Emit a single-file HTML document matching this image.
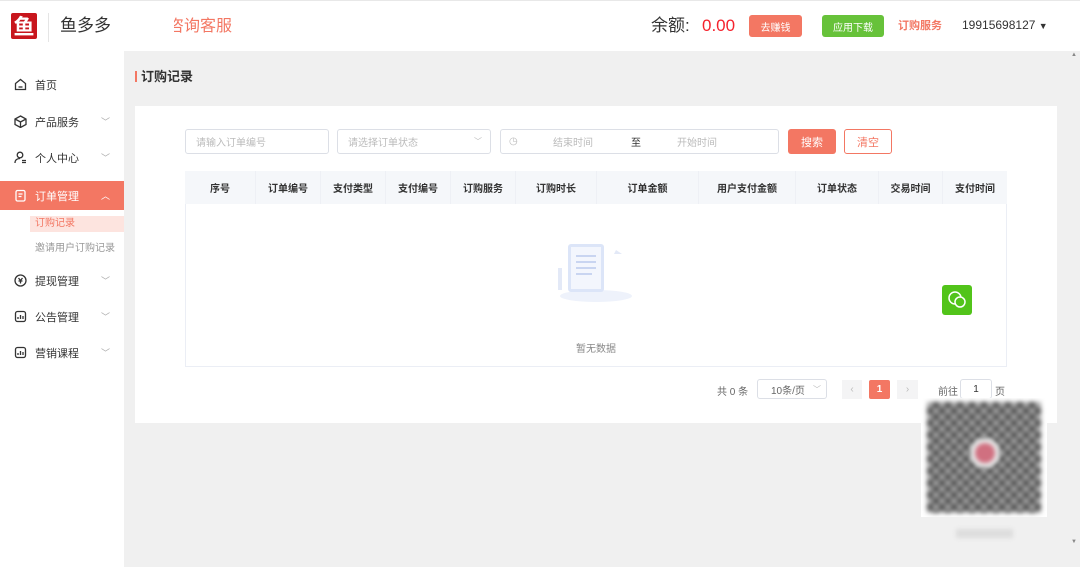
<!DOCTYPE html><html><head><meta charset="utf-8"><style>
*{box-sizing:border-box;margin:0;padding:0}
body{width:1080px;height:567px;overflow:hidden;background:#f0f0f0;font-family:"Liberation Sans","Noto Sans CJK SC",sans-serif;position:relative;font-size:12px;color:#333}
.a{position:absolute}
.c{display:flex;align-items:center;justify-content:center}
.hdr{left:0;top:0;width:1080px;height:51px;background:#fff;border-top:1px solid #e8e8e8}
.side{left:0;top:51px;width:124px;height:516px;background:#fff}
.mi{position:absolute;left:0;width:124px;height:30px;display:flex;align-items:center;padding-left:35px;font-size:11px;color:#333}
.mi svg{position:absolute;left:14px;top:8px}
.mi .ch{position:absolute;right:14px;top:8px;color:#aaa;font-size:9px}
.th{position:absolute;top:171px;height:33px;display:flex;align-items:center;justify-content:center;font-size:10px;font-weight:bold;color:#333;border-right:1px solid #eef0f5}
.inp{position:absolute;top:129px;height:25px;border:1px solid #dcdfe6;border-radius:3px;background:#fff;font-size:10px;color:#bbb;display:flex;align-items:center}
</style></head><body>
<div class="a hdr"></div>
<div class="a c" style="left:11px;top:13px;width:26px;height:26px;background:#c8161d;border-radius:2px;color:#fff;font-size:21px;font-weight:bold">鱼</div>
<div class="a" style="left:48px;top:13px;width:1px;height:29px;background:#e5e5e5"></div>
<div class="a" style="left:60px;top:14px;font-size:17px;color:#333;line-height:24px">鱼多多</div>
<div class="a" style="left:174px;top:14px;width:62px;height:26px;overflow:hidden"><div style="position:absolute;left:-6px;top:0;font-size:16px;line-height:26px;color:#f37763;white-space:nowrap">咨询客服</div></div>
<div class="a" style="left:651px;top:14px;font-size:17px;line-height:24px;color:#333">余额:</div>
<div class="a" style="left:702px;top:14px;font-size:17px;line-height:24px;color:#f5222d">0.00</div>
<div class="a c" style="left:749px;top:15px;width:53px;height:22px;background:#f37763;border-radius:3px;color:#fff;font-size:10px">去赚钱</div>
<div class="a c" style="left:822px;top:15px;width:62px;height:22px;background:#67c23a;border-radius:3px;color:#fff;font-size:10px">应用下载</div>
<div class="a" style="left:898px;top:18px;font-size:11px;line-height:16px;color:#f37763;font-weight:bold">订购服务</div>
<div class="a" style="left:962px;top:17px;font-size:12px;line-height:16px;color:#333">19915698127 <span style="font-size:9px">▼</span></div>
<div class="a side"></div>
<div class="mi" style="top:70px"><svg width="13" height="13" viewBox="0 0 13 13" fill="none" stroke="#333" stroke-width="1.3"><path d="M1.5 5.5L6.5 1.5 11.5 5.5V11.5H1.5Z"/><path d="M4.5 9h4"/></svg>首页</div>
<div class="mi" style="top:107px"><svg width="13" height="13" viewBox="0 0 13 13" fill="none" stroke="#333" stroke-width="1.3"><path d="M6.5 1L12 4V9.5L6.5 12.5 1 9.5V4Z M1 4l5.5 3 5.5-3 M6.5 7v5.5"/></svg>产品服务<span class="ch">﹀</span></div>
<div class="mi" style="top:143px"><svg width="13" height="13" viewBox="0 0 13 13" fill="none" stroke="#333" stroke-width="1.3"><circle cx="6" cy="4" r="2.8"/><path d="M1 12c0-3 2-4.5 5-4.5M8 9.5h4M8 11.5h4"/></svg>个人中心<span class="ch">﹀</span></div>
<div class="mi" style="top:181px;height:29px;background:#f37763;color:#fff"><svg width="13" height="13" viewBox="0 0 13 13" fill="none" stroke="#fff" stroke-width="1.3"><rect x="2" y="1.5" width="9" height="10.5" rx="1.5"/><path d="M4.5 5h4M4.5 7.5h3"/></svg>订单管理<span class="ch" style="color:#fff">︿</span></div>
<div class="a" style="left:30px;top:216px;width:94px;height:16px;background:#fde4df;color:#f37763;font-size:10px;line-height:16px;padding-left:5px;display:flex;align-items:center">订购记录</div>
<div class="a" style="left:35px;top:239px;font-size:10px;color:#999">邀请用户订购记录</div>
<div class="mi" style="top:266px"><svg width="13" height="13" viewBox="0 0 13 13" fill="none" stroke="#333" stroke-width="1.3"><circle cx="6.5" cy="6.5" r="5.5"/><path d="M4.5 4l2 2.5 2-2.5M4.5 7h4M6.5 6.5v3"/></svg>提现管理<span class="ch">﹀</span></div>
<div class="mi" style="top:302px"><svg width="13" height="13" viewBox="0 0 13 13" fill="none" stroke="#333" stroke-width="1.3"><rect x="1.5" y="1.5" width="10" height="10" rx="2"/><path d="M4 9V7M6.5 9V5M9 9V6"/></svg>公告管理<span class="ch">﹀</span></div>
<div class="mi" style="top:338px"><svg width="13" height="13" viewBox="0 0 13 13" fill="none" stroke="#333" stroke-width="1.3"><rect x="1.5" y="1.5" width="10" height="10" rx="2"/><path d="M4 9V7M6.5 9V5M9 9V6"/></svg>营销课程<span class="ch">﹀</span></div>
<div class="a" style="left:135px;top:71px;width:2px;height:11px;background:#f37763"></div>
<div class="a" style="left:141px;top:68px;font-size:13px;line-height:18px;font-weight:bold;color:#333">订购记录</div>
<div class="a" style="left:135px;top:106px;width:922px;height:317px;background:#fff"></div>
<div class="inp" style="left:185px;width:144px;padding-left:10px">请输入订单编号</div>
<div class="inp" style="left:337px;width:154px;padding-left:10px">请选择订单状态<span style="position:absolute;right:8px;font-size:8px">﹀</span></div>
<div class="inp" style="left:500px;width:279px"><span style="position:absolute;left:8px">◷</span><span style="position:absolute;left:52px">结束时间</span><span style="position:absolute;left:130px;color:#333">至</span><span style="position:absolute;left:176px">开始时间</span></div>
<div class="a c" style="left:788px;top:129px;width:48px;height:25px;background:#f37763;border-radius:3px;color:#fff;font-size:11px">搜索</div>
<div class="a c" style="left:844px;top:129px;width:48px;height:25px;border:1px solid #f37763;border-radius:3px;color:#f37763;font-size:11px">清空</div>
<div class="a" style="left:185px;top:171px;width:822px;height:196px;border:1px solid #ebeef5"></div>
<div class="a" style="left:185px;top:171px;width:822px;height:33px;background:#f5f7fa"></div>
<div class="th" style="left:185px;width:71px">序号</div>
<div class="th" style="left:256px;width:65px">订单编号</div>
<div class="th" style="left:321px;width:65px">支付类型</div>
<div class="th" style="left:386px;width:65px">支付编号</div>
<div class="th" style="left:451px;width:65px">订购服务</div>
<div class="th" style="left:516px;width:81px">订购时长</div>
<div class="th" style="left:597px;width:102px">订单金额</div>
<div class="th" style="left:699px;width:97px">用户支付金额</div>
<div class="th" style="left:796px;width:83px">订单状态</div>
<div class="th" style="left:879px;width:64px">交易时间</div>
<div class="th" style="left:943px;width:64px;border:none">支付时间</div>
<svg class="a" style="left:556px;top:238px" width="80" height="66" viewBox="0 0 80 66"><ellipse cx="40" cy="58" rx="36" ry="6" fill="#eef2fb"/><rect x="2" y="30" width="4" height="22" fill="#e3e9f7"/><rect x="12" y="6" width="36" height="48" rx="3" fill="#dce5f8"/><rect x="15" y="9" width="30" height="42" fill="#f3f6fd"/><path d="M20 18h20M20 24h20M20 30h20M20 36h16" stroke="#c9d5f1" stroke-width="2"/><path d="M60 12l6 4h-8z" fill="#e3e9f7"/></svg>
<div class="a" style="left:576px;top:340px;font-size:10px;color:#888">暂无数据</div>
<div class="a" style="left:942px;top:285px;width:30px;height:30px;background:#52c41a;border-radius:3px"><svg width="30" height="30" viewBox="0 0 30 30" fill="none" stroke="#fff" stroke-width="1.5"><circle cx="13" cy="13" r="6"/><circle cx="18" cy="17" r="5" fill="#52c41a"/></svg></div>
<div class="a" style="left:717px;top:383px;font-size:10px;color:#666">共 0 条</div>
<div class="a" style="left:757px;top:379px;width:70px;height:20px;border:1px solid #dcdfe6;border-radius:3px;font-size:10px;color:#666;display:flex;align-items:center;padding-left:13px">10条/页<span style="position:absolute;right:5px;color:#bbb;font-size:8px">﹀</span></div>
<div class="a c" style="left:842px;top:380px;width:20px;height:19px;background:#f4f4f5;color:#bbb;font-size:10px">‹</div>
<div class="a c" style="left:869px;top:380px;width:21px;height:19px;background:#f37763;color:#fff;font-size:10px;font-weight:bold;border-radius:2px">1</div>
<div class="a c" style="left:897px;top:380px;width:21px;height:19px;background:#f4f4f5;color:#bbb;font-size:10px">›</div>
<div class="a" style="left:938px;top:383px;font-size:10px;color:#666">前往</div>
<div class="a c" style="left:960px;top:379px;width:32px;height:20px;border:1px solid #dcdfe6;border-radius:3px;font-size:10px">1</div>
<div class="a" style="left:995px;top:383px;font-size:10px;color:#666">页</div>
<div class="a" style="left:921px;top:398px;width:126px;height:119px;background:#fff;padding:4px 6px;overflow:hidden">
<div style="width:114px;height:111px;background:repeating-conic-gradient(#4a4a4a 0 25%,#a8a8a8 0 50%) 0 0/12px 12px;filter:blur(2.5px)"></div></div>
<div class="a" style="left:975px;top:443px;width:20px;height:20px;border-radius:50%;background:#d07080;filter:blur(2px);box-shadow:0 0 0 5px #e8e8e8"></div>
<div class="a" style="left:956px;top:529px;width:57px;height:9px;background:#ddd;filter:blur(2px)"></div>
<div class="a" style="left:1071px;top:52px;font-size:6px;color:#888">▲</div>
<div class="a" style="left:1071px;top:539px;font-size:6px;color:#888">▼</div>
</body></html>
